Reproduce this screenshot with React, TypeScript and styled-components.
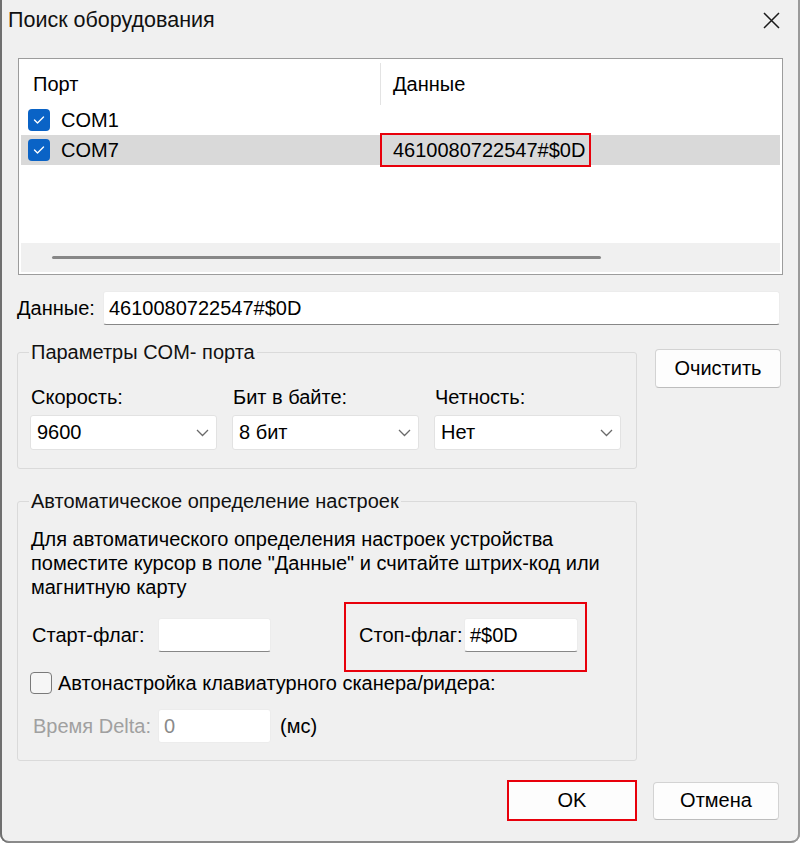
import styled, { createGlobalStyle } from 'styled-components';

const GlobalStyle = createGlobalStyle`
  * { box-sizing: border-box; }
  html, body { margin: 0; padding: 0; background: #ffffff; }
  body {
    font-family: "Liberation Sans", Arial, sans-serif;
    font-size: 20px;
    color: #000;
  }
`;

type Port = {
  name: string;
  data: string;
  checked: boolean;
  selected: boolean;
};

const ports: Port[] = [
  { name: 'COM1', data: '', checked: true, selected: false },
  { name: 'COM7', data: '4610080722547#$0D', checked: true, selected: true },
];

const selects = [
  { label: 'Скорость:', value: '9600' },
  { label: 'Бит в байте:', value: '8 бит' },
  { label: 'Четность:', value: 'Нет' },
];

const CheckMark = () => (
  <svg width="12" height="10" viewBox="0 0 12 10">
    <polyline points="1.5,5 4.5,8 10.5,2" fill="none" stroke="#fff" strokeWidth="1.4" strokeLinecap="round" strokeLinejoin="round" />
  </svg>
);

const Chevron = () => (
  <svg width="13" height="8" viewBox="0 0 13 8">
    <polyline points="1,1 6.5,6.5 12,1" fill="none" stroke="#6a6a6a" strokeWidth="1.3" />
  </svg>
);

const App = () => {
  return (
    <>
      <GlobalStyle />
      <S.Window>
        <S.TitleBar>
          <S.Title>Поиск оборудования</S.Title>
          <S.CloseButton>
            <svg width="17" height="17" viewBox="0 0 17 17">
              <path d="M1 1 L16 16 M16 1 L1 16" stroke="#1a1a1a" strokeWidth="1.5" />
            </svg>
          </S.CloseButton>
        </S.TitleBar>

        <S.Body>
          <S.ListBox>
            <S.ListHeader>
              <S.HeaderCell $divider>Порт</S.HeaderCell>
              <S.HeaderCell>Данные</S.HeaderCell>
            </S.ListHeader>
            {ports.map(port => (
              <S.ListRow key={port.name} $selected={port.selected}>
                <S.PortCell>
                  <S.CheckBox $checked={port.checked}>{port.checked && <CheckMark />}</S.CheckBox>
                  {port.name}
                </S.PortCell>
                <S.DataCell>{port.data && <S.Marked>{port.data}</S.Marked>}</S.DataCell>
              </S.ListRow>
            ))}
            <S.ListFiller />
            <S.HScroll>
              <S.HThumb />
            </S.HScroll>
          </S.ListBox>

          <S.DataRow>
            <S.DataLabel>Данные:</S.DataLabel>
            <S.TextBox $grow>4610080722547#$0D</S.TextBox>
          </S.DataRow>

          <S.Middle>
            <S.Groups>
              <S.Group>
                <S.Legend>Параметры COM- порта</S.Legend>
                <S.SelectRow>
                  {selects.map(item => (
                    <S.SelectField key={item.label}>
                      <S.FieldLabel>{item.label}</S.FieldLabel>
                      <S.Select>
                        {item.value}
                        <Chevron />
                      </S.Select>
                    </S.SelectField>
                  ))}
                </S.SelectRow>
              </S.Group>

              <S.Group $gap={21} $bottom={17}>
                <S.Legend>Автоматическое определение настроек</S.Legend>
                <S.Description>
                  Для автоматического определения настроек устройства
                  <br />
                  поместите курсор в поле "Данные" и считайте штрих-код или
                  <br />
                  магнитную карту
                </S.Description>
                <S.FlagRow>
                  <S.StartFlag>
                    <S.FlagLabel $width={128}>Старт-флаг:</S.FlagLabel>
                    <S.TextBox $width={113} />
                  </S.StartFlag>
                  <S.StopFlag>
                    <S.FlagLabel $width={107}>Стоп-флаг:</S.FlagLabel>
                    <S.TextBox $width={114}>#$0D</S.TextBox>
                  </S.StopFlag>
                </S.FlagRow>
                <S.CheckRow>
                  <S.CheckBox $checked={false} />
                  Автонастройка клавиатурного сканера/ридера:
                </S.CheckRow>
                <S.DeltaRow>
                  <S.FlagLabel $width={127} $disabled>Время Delta:</S.FlagLabel>
                  <S.TextBox $width={113} $disabled>0</S.TextBox>
                  <S.Unit>(мс)</S.Unit>
                </S.DeltaRow>
              </S.Group>
            </S.Groups>
            <S.Button $width={126} $height={39}>Очистить</S.Button>
          </S.Middle>

          <S.Footer>
            <S.Button $width={130} $height={41} $marked>OK</S.Button>
            <S.Button $width={126} $height={38}>Отмена</S.Button>
          </S.Footer>
        </S.Body>
      </S.Window>
    </>
  );
};

export default App;

const S = {
  Window: styled.div`
    width: 800px;
    height: 843px;
    overflow: hidden;
    background: #f0f0f0;
    border-radius: 0 0 9px 9px;
    box-shadow: inset 2px 0 0 #6f6f6f, inset -2px 0 0 #9a9a9a, inset 0 -2px 0 #8a8a8a;
  `,
  TitleBar: styled.div`
    height: 40px;
    display: flex;
    align-items: center;
    justify-content: space-between;
    padding: 0 20px 0 8px;
  `,
  Title: styled.span`
    font-size: 21.5px;
    color: #111;
  `,
  CloseButton: styled.span`
    display: flex;
    width: 17px;
    height: 17px;
  `,
  Body: styled.div`
    padding: 18px 17px 0 17px;
    display: flex;
    flex-direction: column;
  `,
  ListBox: styled.div`
    height: 217px;
    margin-left: 1px;
    background: #fff;
    border: 1px solid #9c9c9c;
    padding: 2px;
    display: flex;
    flex-direction: column;
  `,
  ListHeader: styled.div`
    height: 44px;
    display: flex;
  `,
  HeaderCell: styled.div<{ $divider?: boolean }>`
    width: ${p => (p.$divider ? '360px' : 'auto')};
    flex: ${p => (p.$divider ? 'none' : '1')};
    display: flex;
    align-items: center;
    padding-left: 12px;
    margin-top: 2px;
    border-right: ${p => (p.$divider ? '1px solid #e3e3e3' : 'none')};
  `,
  ListRow: styled.div<{ $selected: boolean }>`
    height: 30px;
    display: flex;
    align-items: center;
    background: ${p => (p.$selected ? '#d9d9d9' : 'transparent')};
  `,
  PortCell: styled.div`
    width: 359px;
    display: flex;
    align-items: center;
    gap: 11px;
    padding-left: 7px;
  `,
  DataCell: styled.div`
    flex: 1;
    display: flex;
    align-items: center;
  `,
  Marked: styled.span`
    height: 34px;
    display: flex;
    align-items: center;
    padding: 0 4px 0 11px;
    border: 2px solid #e8000b;
  `,
  CheckBox: styled.span<{ $checked: boolean }>`
    width: 22px;
    height: 22px;
    flex: none;
    display: inline-flex;
    align-items: center;
    justify-content: center;
    border-radius: 4px;
    background: ${p => (p.$checked ? '#0a63c6' : '#f6f6f6')};
    border: ${p => (p.$checked ? 'none' : '1.5px solid #7a7a7a')};
  `,
  ListFiller: styled.div`
    flex: 1;
  `,
  HScroll: styled.div`
    height: 29px;
    background: #f0f0f0;
    display: flex;
    align-items: center;
    padding-left: 31px;
  `,
  HThumb: styled.div`
    width: 549px;
    height: 3px;
    border-radius: 2px;
    background: #878787;
  `,
  DataRow: styled.div`
    margin-top: 16px;
    height: 34px;
    display: flex;
    align-items: center;
    padding-right: 3px;
  `,
  DataLabel: styled.span`
    width: 86px;
  `,
  TextBox: styled.div<{ $width?: number; $grow?: boolean; $disabled?: boolean }>`
    width: ${p => (p.$width ? `${p.$width}px` : 'auto')};
    flex: ${p => (p.$grow ? '1' : 'none')};
    height: 34px;
    display: flex;
    align-items: center;
    padding-left: 5px;
    background: #fff;
    color: ${p => (p.$disabled ? '#8a8a8a' : '#000')};
    border: 1px solid #ececec;
    border-bottom: ${p => (p.$disabled ? '1px solid #ececec' : '1px solid #878787')};
    border-radius: 3px;
  `,
  Middle: styled.div`
    margin-top: 16px;
    display: flex;
    align-items: flex-start;
    gap: 18px;
  `,
  Groups: styled.div`
    width: 620px;
    display: flex;
    flex-direction: column;
  `,
  Group: styled.fieldset<{ $gap?: number; $bottom?: number }>`
    margin: ${p => (p.$gap ? `${p.$gap}px` : '0')} 0 0 0;
    padding: 0 12px ${p => (p.$bottom ? `${p.$bottom}px` : '18px')} 12px;
    min-inline-size: auto;
    border: 1px solid #dadada;
    border-radius: 3px;
  `,
  Legend: styled.legend`
    padding: 0 2px;
    margin-left: -1px;
    line-height: 22px;
    color: #111;
  `,
  SelectRow: styled.div`
    margin-top: 23px;
    display: flex;
    gap: 15px;
  `,
  SelectField: styled.div`
    width: 187px;
    display: flex;
    flex-direction: column;
    gap: 7px;
  `,
  FieldLabel: styled.span`
    line-height: 22px;
    padding-left: 1px;
  `,
  Select: styled.div`
    height: 35px;
    display: flex;
    align-items: center;
    justify-content: space-between;
    padding: 0 7px 0 6px;
    background: #fff;
    border: 1px solid #e2e2e2;
    border-radius: 3px;
  `,
  Description: styled.div`
    margin-top: 15px;
    line-height: 24px;
    padding-left: 1px;
  `,
  FlagRow: styled.div`
    margin-top: 3px;
    display: flex;
    align-items: flex-start;
    gap: 73px;
  `,
  StartFlag: styled.div`
    margin-top: 16px;
    display: flex;
    align-items: center;
  `,
  StopFlag: styled.div`
    display: flex;
    align-items: center;
    padding: 14px 7px 18px 11px;
    border: 2px solid #e8000b;
  `,
  FlagLabel: styled.span<{ $width: number; $disabled?: boolean }>`
    width: ${p => p.$width}px;
    padding-left: 2px;
    color: ${p => (p.$disabled ? '#a0a0a0' : '#000')};
  `,
  CheckRow: styled.div`
    height: 22px;
    display: flex;
    align-items: center;
    gap: 6px;
  `,
  DeltaRow: styled.div`
    margin-top: 15px;
    display: flex;
    align-items: center;
    padding-left: 1px;
  `,
  Unit: styled.span`
    margin-left: 9px;
  `,
  Button: styled.div<{ $width: number; $height: number; $marked?: boolean }>`
    width: ${p => p.$width}px;
    height: ${p => p.$height}px;
    flex: none;
    display: flex;
    align-items: center;
    justify-content: center;
    background: #fdfdfd;
    border: ${p => (p.$marked ? '2px solid #e8000b' : '1px solid #d3d3d3')};
    border-bottom-color: ${p => (p.$marked ? '#e8000b' : '#bdbdbd')};
    border-radius: ${p => (p.$marked ? '0' : '4px')};
    margin-top: ${p => (p.$height === 39 ? '8px' : '0')};
  `,
  Footer: styled.div`
    margin-top: 19px;
    display: flex;
    align-items: center;
    justify-content: flex-end;
    gap: 16px;
    padding-right: 4px;
  `,
};
